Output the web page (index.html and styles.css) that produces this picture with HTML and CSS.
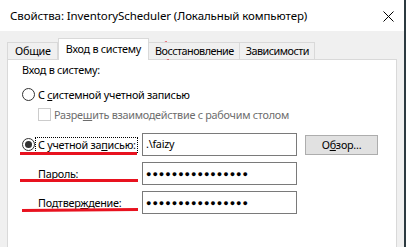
FILE: index.html
```html
<!doctype html>
<html lang="ru">
  <head>
    <meta charset="utf-8">
    <title>Свойства: InventoryScheduler</title>
    <link rel="stylesheet" href="styles.css">
  </head>
  <body>
    <div class="window">
      <div class="titlebar">
        <span class="title">Свойства: InventoryScheduler (Локальный компьютер)</span>
        <svg class="close" width="11" height="11" viewBox="0 0 11 11">
          <path d="M0.5 0.5 L10.5 10.5 M10.5 0.5 L0.5 10.5" stroke="#000" stroke-width="1" fill="none"/>
        </svg>
      </div>

      <div class="client">
        <div class="tabs">
          <div class="tab">Общие</div>
          <div class="tab active">Вход в систему</div>
          <div class="tab tight">Восстановление</div>
          <div class="tab tight">Зависимости</div>
        </div>

        <div class="panel">
          <div class="row group-label">Вход в систему:</div>

          <div class="row radio-row first">
            <span class="radio"></span>
            <span>С <u>с</u>истемной учетной записью</span>
          </div>

          <div class="row check-row">
            <span class="checkbox"></span>
            <span class="disabled">Разре<u>ш</u>ить взаимодействие с рабочим столом</span>
          </div>

          <div class="row field-row account">
            <span class="radio checked"></span>
            <span class="focus">С учетной за<u>п</u>исью:</span>
            <span class="field">.\faizy</span>
            <span class="button">О<u>б</u>зор...</span>
          </div>

          <div class="row field-row">
            <span class="label">Паро<u>л</u>ь:</span>
            <span class="field"><span class="dots">●●●●●●●●●●●●●●●●</span></span>
          </div>

          <div class="row field-row">
            <span class="label">Подтвер<u>ж</u>дение:</span>
            <span class="field"><span class="dots">●●●●●●●●●●●●●●●●</span></span>
          </div>
        </div>
      </div>

      <svg class="marks" width="404" height="247" viewBox="0 0 404 247">
        <path d="M149 50 L166 42.5 L167 46.5 L191 46 Q193.5 50 191.5 54 L168.5 54.5 L168 58.5 Z"
              fill="none" stroke="#e8121f" stroke-width="2.4" stroke-linejoin="round"/>
        <path d="M20 153.5 L137 153.5" stroke="#e8121f" stroke-width="3"/>
        <path d="M20 180.5 L138 180.5" stroke="#e8121f" stroke-width="3"/>
        <path d="M22 210.5 L138 209.5" stroke="#e8121f" stroke-width="3"/>
      </svg>
    </div>
  </body>
</html>
```

FILE: styles.css
```css
body {
    margin: 0;
    background: #2c3a40;
    font-family: "Noto Sans", "Open Sans", sans-serif;
    font-size: 10.8px;
    letter-spacing: -0.25px;
    color: #000;
}

.window {
    position: relative;
    width: 404px;
    height: 247px;
    background: #f0f0f0;
    overflow: hidden;
}

.titlebar {
    height: 31px;
    background: #fff;
    display: flex;
    align-items: center;
    justify-content: space-between;
    padding: 0 10px 0 10px;
}

.title {
    font-size: 11.5px;
    letter-spacing: -0.1px;
    margin-top: -1px;
}

.close {
    margin-top: 2px;
}

.client {
    padding: 7px 7px 0 7px;
}

.tabs {
    display: flex;
    align-items: flex-end;
    height: 21px;
    position: relative;
    z-index: 1;
}

.tab {
    height: 16px;
    line-height: 15px;
    padding: 0 6px 0 7px;
    border: 1px solid #d9d9d9;
    border-bottom: none;
    background: #f0f0f0;
}

.tab.tight {
    padding: 0 5px 0 6px;
    letter-spacing: -0.5px;
}

.tab + .tab {
    border-left: none;
}

.tab.active {
    height: 21px;
    line-height: 19px;
    background: #fff;
    padding: 0 7px;
    margin-bottom: -1px;
    border-left: 1px solid #d9d9d9;
    border-right: 1px solid #d9d9d9;
}

.tab.active + .tab {
    border-left: none;
}

.panel {
    background: #fff;
    border: 1px solid #d9d9d9;
    height: 200px;
    padding: 0 14px;
}

.row {
    display: flex;
    align-items: center;
    white-space: nowrap;
}

.group-label {
    margin-top: 2px;
    height: 14px;
}

.radio-row {
    margin-top: 11px;
    height: 14px;
}

.check-row {
    margin-top: 6px;
    height: 14px;
    padding-left: 16px;
}

.field-row {
    margin-top: 6px;
    height: 23px;
}

.field-row.account {
    margin-top: 12px;
}

.radio {
    width: 11px;
    height: 11px;
    border: 1px solid #333;
    border-radius: 50%;
    background: #fff;
    margin-right: 3px;
    flex: none;
    position: relative;
}

.field-row .radio {
    margin-right: 1px;
}

.radio.checked::after {
    content: "";
    position: absolute;
    left: 2px;
    top: 2px;
    width: 7px;
    height: 7px;
    border-radius: 50%;
    background: #333;
}

.checkbox {
    width: 11px;
    height: 11px;
    border: 1px solid #cccccc;
    margin-right: 3px;
    flex: none;
}

.disabled {
    color: #6d6d6d;
}

.focus {
    width: 99px;
    height: 14px;
    line-height: 13px;
    outline: 1px dotted #000;
    padding-left: 2px;
    margin-right: 5px;
    flex: none;
}

.label {
    width: 104px;
    padding-left: 16px;
    flex: none;
}

.field {
    width: 150px;
    height: 21px;
    line-height: 20px;
    border: 1px solid #7a7a7a;
    padding-left: 3px;
    background: #fff;
    flex: none;
}

.dots {
    font-family: "Liberation Sans", sans-serif;
    font-size: 9px;
    letter-spacing: 1px;
}

.button {
    margin-left: 8px;
    width: 71px;
    height: 18px;
    line-height: 17px;
    text-align: center;
    background: #e1e1e1;
    border: 1px solid #adadad;
}

.marks {
    position: absolute;
    left: 0;
    top: 0;
    pointer-events: none;
}
```
